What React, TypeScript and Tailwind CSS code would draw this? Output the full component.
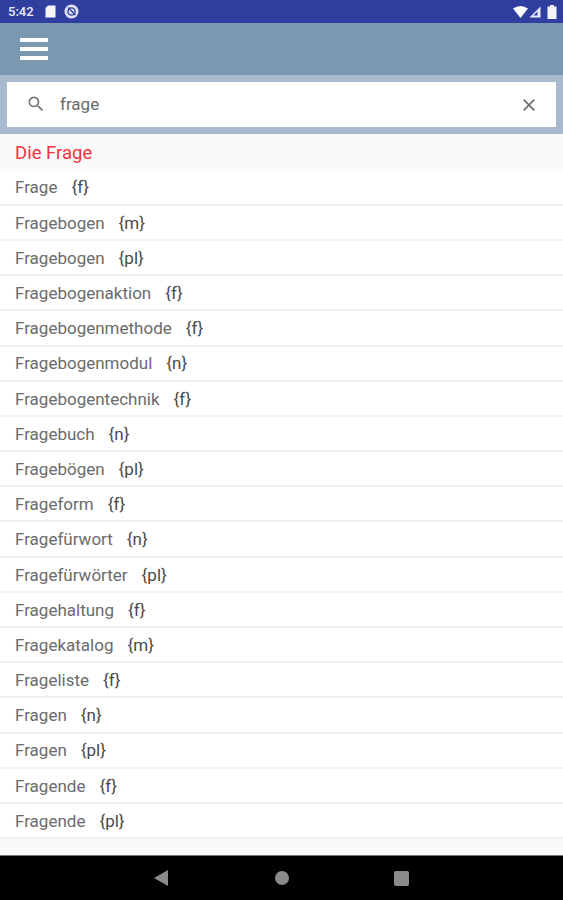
const words: [string, string][] = [
  ["Frage", "{f}"],
  ["Fragebogen", "{m}"],
  ["Fragebogen", "{pl}"],
  ["Fragebogenaktion", "{f}"],
  ["Fragebogenmethode", "{f}"],
  ["Fragebogenmodul", "{n}"],
  ["Fragebogentechnik", "{f}"],
  ["Fragebuch", "{n}"],
  ["Fragebögen", "{pl}"],
  ["Frageform", "{f}"],
  ["Fragefürwort", "{n}"],
  ["Fragefürwörter", "{pl}"],
  ["Fragehaltung", "{f}"],
  ["Fragekatalog", "{m}"],
  ["Frageliste", "{f}"],
  ["Fragen", "{n}"],
  ["Fragen", "{pl}"],
  ["Fragende", "{f}"],
  ["Fragende", "{pl}"],
];

function StatusBar() {
  return (
    <div className="h-[23px] bg-[#303f9f] flex items-center justify-between pl-2 pr-[6px] text-white">
      <div className="flex items-center">
        <span className="text-[13px] font-medium text-[#e8eaf6] w-[26px]">5:42</span>
        <svg className="ml-[11px]" width="11" height="13" viewBox="0 0 11 13">
          <path d="M3 .5h7.5v12H.5V3z" fill="#f5f5fa" />
        </svg>
        <svg className="ml-[8px]" width="15" height="15" viewBox="0 0 15 15" fill="none">
          <circle cx="7.5" cy="7.5" r="7" fill="#dfe3f3" />
          <circle cx="7.5" cy="7.5" r="3.6" stroke="#303f9f" strokeWidth="1.4" />
          <path d="M4 3.5l7.5 7.5" stroke="#303f9f" strokeWidth="1.3" />
        </svg>
      </div>
      <div className="flex items-center">
        <svg width="15" height="12" viewBox="0 0 15 12">
          <path d="M0 2.5Q7.5-2.5 15 2.5L7.5 12z" fill="#ffffff" />
        </svg>
        <svg className="ml-[1px]" width="12" height="12" viewBox="0 0 12 12">
          <path d="M11.5 .5v11H.5z" fill="#e8eaf6" />
          <path d="M8.5 5.5v4h-4z" fill="#303f9f" />
        </svg>
        <svg className="ml-[6px]" width="10" height="14" viewBox="0 0 10 14">
          <path d="M3 0h4v1.5h2.5V14H.5V1.5H3z" fill="#f5f5fa" />
        </svg>
      </div>
    </div>
  );
}

function NavBar() {
  return (
    <div className="h-[45px] bg-black border-t border-[#777] flex items-center justify-center">
      <div className="flex items-center gap-[105px]">
        <svg className="mr-[2px]" width="14" height="16" viewBox="0 0 14 16">
          <path d="M14 0v16L0 8z" fill="#8a8a8a" />
        </svg>
        <div className="w-[14px] h-[14px] rounded-full bg-[#8a8a8a]" />
        <div className="w-[15px] h-[15px] rounded-[2px] bg-[#8a8a8a]" />
      </div>
    </div>
  );
}

export default function App() {
  return (
    <div className="h-[900px] flex flex-col bg-[#fafafa] font-['Roboto',sans-serif] overflow-hidden">
      <StatusBar />

      {/* toolbar */}
      <div className="h-[52px] bg-[#7b98b1] flex items-center pl-5">
        <div className="w-[28px] flex flex-col gap-[5px]">
          <div className="h-[4px] bg-white" />
          <div className="h-[4px] bg-white" />
          <div className="h-[4px] bg-white" />
        </div>
      </div>

      {/* search */}
      <div className="h-[59px] bg-[#a9bace] px-[7px] pt-[7px]">
        <div className="h-[45px] bg-white flex items-center pl-[19px] pr-[18px]">
          <svg width="20" height="20" viewBox="0 0 24 24" className="-mt-[1px]">
            <path
              d="M15.5 14h-.79l-.28-.27A6.47 6.47 0 0 0 16 9.5 6.5 6.5 0 1 0 9.5 16c1.61 0 3.09-.59 4.23-1.57l.27.28v.79l5 4.99L20.49 19l-4.99-5zm-6 0C7.01 14 5 11.99 5 9.5S7.01 5 9.5 5 14 7.01 14 9.5 11.99 14 9.5 14z"
              fill="#757575"
            />
          </svg>
          <span className="ml-[14px] text-[17px] text-[#6b6b6b]">frage</span>
          <svg width="18" height="18" viewBox="0 0 24 24" className="ml-auto">
            <path
              d="M19 6.41 17.59 5 12 10.59 6.41 5 5 6.41 10.59 12 5 17.59 6.41 19 12 13.41 17.59 19 19 17.59 13.41 12z"
              fill="#6e6e6e"
              transform="translate(-1.5 -1.5) scale(1.125)"
            />
          </svg>
        </div>
      </div>

      <div className="h-[36.6px] flex items-center pl-[15px] pt-[3px] text-[18.5px] text-[#f5333d]">Die Frage</div>

      <div className="bg-white">
        {words.map(([word, gender], i) => (
          <div
            key={i}
            className="h-[35.2px] flex items-center pl-[15px] pt-[2px] border-b-2 border-[#f0f0f0] text-[17px] text-[#6b6b6b]"
          >
            <span>{word}</span>
            <span className="ml-[14px] text-[#4a4a4a]">{gender}</span>
          </div>
        ))}
      </div>

      <div className="flex-1" />
      <NavBar />
    </div>
  );
}
